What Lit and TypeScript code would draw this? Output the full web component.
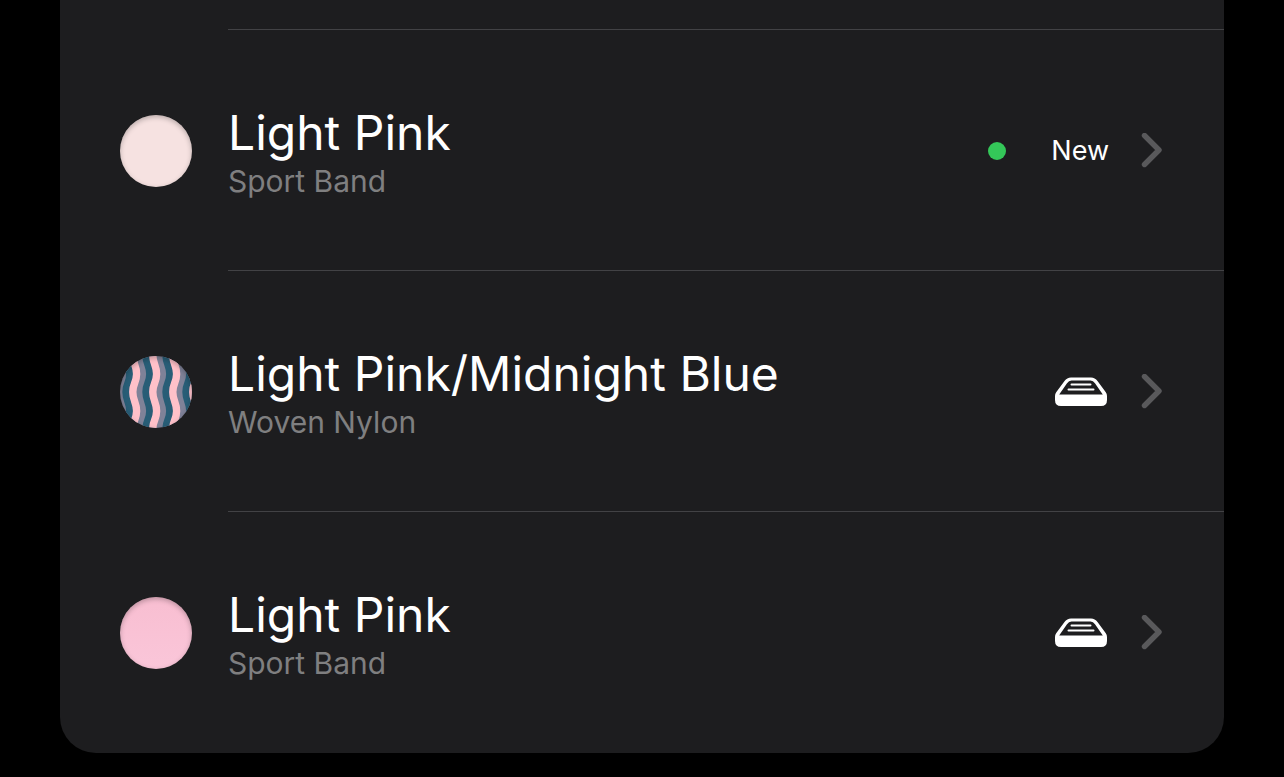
import { LitElement, html, svg, css } from "lit";
import { customElement, property } from "lit/decorators.js";

interface Band {
  name: string;
  kind: string;
  swatch: "blush" | "woven" | "pink";
  isNew: boolean;
}

const BANDS: Band[] = [
  { name: "Light Pink", kind: "Sport Band", swatch: "blush", isNew: true },
  { name: "Light Pink/Midnight Blue", kind: "Woven Nylon", swatch: "woven", isNew: false },
  { name: "Light Pink", kind: "Sport Band", swatch: "pink", isNew: false },
];

// One vertical wavy thread whose centre line swings to both sides of x.
const thread = (x: number, colour: string, width: number) => {
  const l = x - 1.9;
  const r = x + 1.9;
  return svg`<path
    d="M${l} -1 C${l} 8 ${r} 9 ${r} 18 S${l} 27 ${l} 36 S${r} 46 ${r} 55 S${l} 64 ${l} 73"
    fill="none" stroke=${colour} stroke-width=${width}
  />`;
};

@customElement("band-swatch")
export class BandSwatch extends LitElement {
  @property() kind: Band["swatch"] = "pink";

  static styles = css`
    :host {
      display: block;
      flex: none;
      width: 72px;
      height: 72px;
    }
    .disc {
      position: relative;
      width: 100%;
      height: 100%;
      border-radius: 50%;
      overflow: hidden;
    }
    .disc::after {
      content: "";
      position: absolute;
      inset: 0;
      border-radius: 50%;
      box-shadow: inset 0 2px 5px rgba(0, 0, 0, 0.25);
    }
    .blush {
      background: #f6e2e1;
    }
    .pink {
      background: linear-gradient(#f8bed1, #fac6d9);
    }
    svg {
      display: block;
      width: 100%;
      height: 100%;
    }
  `;

  render() {
    return html`<div class="disc ${this.kind}">
      ${this.kind === "woven"
        ? html`<svg viewBox="0 0 72 72" aria-hidden="true">
            <rect width="72" height="72" fill="#7f8298" />
            ${[-5.3, 14.7, 34.7, 54.7, 74.7].map((x) => [
              thread(x - 7, "#285d76", 7),
              thread(x, "#ffc1c9", 7.4),
            ])}
          </svg>`
        : null}
    </div>`;
  }
}

@customElement("app-root")
export class AppRoot extends LitElement {
  static styles = css`
    :host {
      display: block;
      box-sizing: border-box;
      min-height: 100vh;
      padding: 0 60px 24px;
      background: #000;
      color: #fff;
      font-family: Inter, "Liberation Sans", sans-serif;
    }
    .card {
      margin: 0;
      padding: 29px 0 1px;
      list-style: none;
      background: #1d1d1f;
      border-radius: 0 0 36px 36px;
    }
    .row {
      display: flex;
      align-items: center;
      gap: 36px;
      padding-left: 60px;
      color: inherit;
      text-decoration: none;
    }
    band-swatch {
      margin-top: 2px;
    }
    .body {
      flex: 1;
      min-width: 0;
      display: flex;
      align-items: center;
      padding: 73px 60px 71px 0;
      border-top: 1px solid #424245;
    }
    .text {
      flex: 1;
      min-width: 0;
    }
    .name {
      font-size: 48px;
      line-height: 60px;
    }
    .kind {
      font-size: 30px;
      line-height: 36px;
      color: #7f7f80;
    }
    .status {
      display: flex;
      align-items: center;
      font-size: 27px;
      line-height: 36px;
    }
    .dot {
      width: 18px;
      height: 18px;
      margin-right: 45px;
      border-radius: 50%;
      background: #34c759;
    }
    .tray,
    .chevron {
      display: block;
      flex: none;
    }
    .chevron {
      margin-left: 31px;
    }
  `;

  private status(band: Band) {
    return band.isNew
      ? html`<span class="dot"></span><span>New</span>`
      : html`<svg class="tray" width="54" height="32" viewBox="0 0 54 32" role="img" aria-label="In collection">
          <path d="M0 20 Q0 18 1.200 16.200 L9.500 5 Q12 1.500 16 1.500 H36 Q40 1.500 42.500 5 L50.800 16.200 Q52 18 52 20 V24 Q52 30 46 30 H6 Q0 30 0 24 Z" fill="#fff" />
          <path d="M4.200 18.500 L12 7.200 Q13.800 4.500 16.500 4.500 H35.500 Q38.200 4.500 40 7.200 L47.800 18.500 Z" fill="#1d1d1f" />
          <path d="M16.500 8.500 H35.500 M13.500 13.500 H38.500" stroke="#fff" stroke-width="2" stroke-linecap="round" />
        </svg>`;
  }

  render() {
    return html`<ul class="card">
      ${BANDS.map(
        (band) => html`<li>
          <a class="row" href="#">
            <band-swatch .kind=${band.swatch}></band-swatch>
            <div class="body">
              <div class="text">
                <div class="name">${band.name}</div>
                <div class="kind">${band.kind}</div>
              </div>
              <div class="status">
                ${this.status(band)}
                <svg class="chevron" width="24" height="36" viewBox="0 0 24 36" aria-hidden="true">
                  <path d="M4.500 2.500 L19 17 L4.500 31.500" fill="none" stroke="#59595b" stroke-width="5.400" stroke-linecap="round" stroke-linejoin="round" />
                </svg>
              </div>
            </div>
          </a>
        </li>`
      )}
    </ul>`;
  }
}
